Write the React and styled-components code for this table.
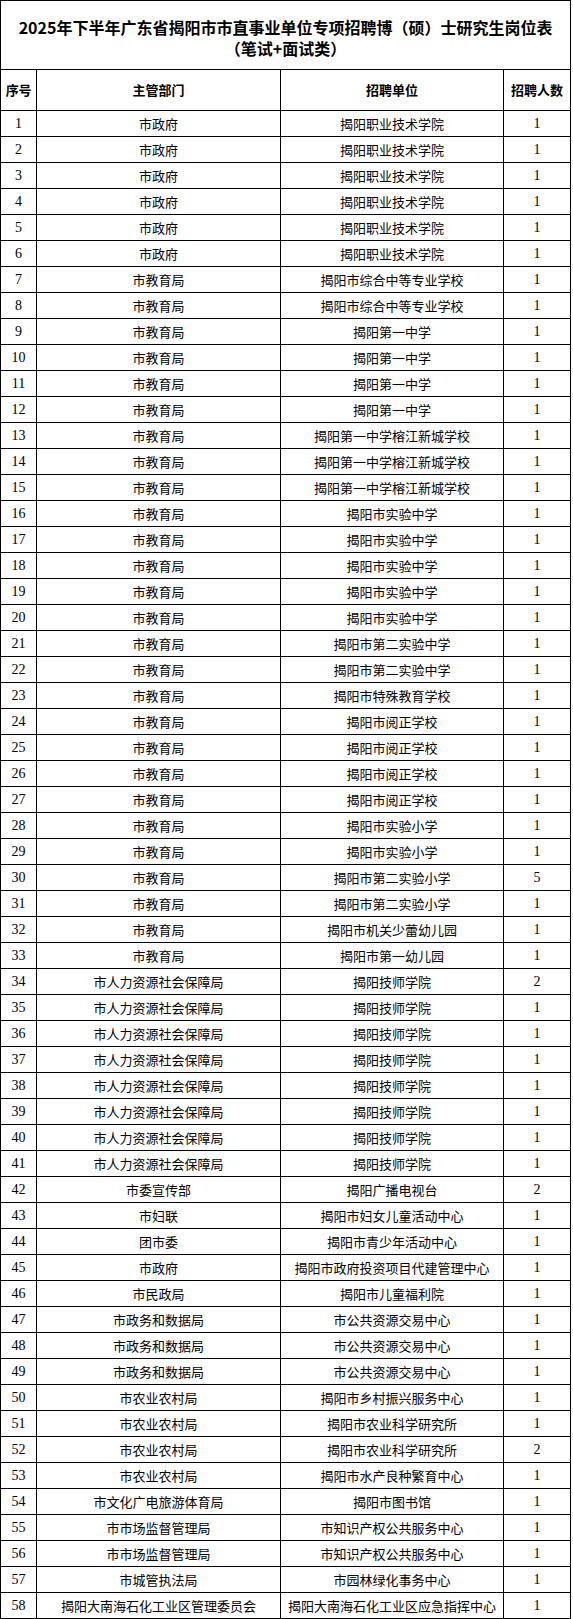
import React from "react";
import styled, { createGlobalStyle } from "styled-components";

const Global = createGlobalStyle`
  html, body { margin: 0; padding: 0; background: #fff; }
  body { font-family: "Noto Sans CJK SC", sans-serif; color: #000; }
`;

const Table = styled.table`
  border-collapse: collapse;
  table-layout: fixed;
  width: 570px;
  margin: 0;
  color: #000;
`;

const TitleCell = styled.th`
  height: 69px;
  padding: 5px 0 0 0;
  border: 1px solid #000;
  font-family: "Noto Sans CJK SC", sans-serif;
  font-weight: 700;
  font-size: 16px;
  text-align: center;
  vertical-align: middle;
  box-sizing: border-box;
`;

const TitleLine = styled.span`
  display: block;
  line-height: 21px;
  height: 21px;
  white-space: nowrap;
`;

const HeadCell = styled.th`
  height: 40px;
  padding: 0;
  border: 1px solid #000;
  font-family: "Noto Sans CJK SC", sans-serif;
  font-weight: 700;
  font-size: 13px;
  line-height: 16px;
  text-align: center;
  vertical-align: middle;
  white-space: nowrap;
  overflow: hidden;
  letter-spacing: ${(p) => (p.$tight ? "-0.3px" : "0")};
`;

const Cell = styled.td`
  height: 26px;
  padding: 1px 0 0 0;
  border: 1px solid #000;
  font-family: ${(p) =>
    p.$num
      ? '"Liberation Serif", "Noto Sans CJK SC", serif'
      : '"Noto Sans CJK SC", sans-serif'};
  font-size: ${(p) => (p.$num ? "14px" : "13px")};
  font-weight: 400;
  line-height: 16px;
  text-align: center;
  vertical-align: middle;
  white-space: nowrap;
  overflow: hidden;
  box-sizing: border-box;
`;

const Row = styled.tr``;

const groups = [
  [6, "市政府", "揭阳职业技术学院", 1],
  [2, "市教育局", "揭阳市综合中等专业学校", 1],
  [4, "市教育局", "揭阳第一中学", 1],
  [3, "市教育局", "揭阳第一中学榕江新城学校", 1],
  [5, "市教育局", "揭阳市实验中学", 1],
  [2, "市教育局", "揭阳市第二实验中学", 1],
  [1, "市教育局", "揭阳市特殊教育学校", 1],
  [4, "市教育局", "揭阳市阅正学校", 1],
  [2, "市教育局", "揭阳市实验小学", 1],
  [1, "市教育局", "揭阳市第二实验小学", 5],
  [1, "市教育局", "揭阳市第二实验小学", 1],
  [1, "市教育局", "揭阳市机关少蕾幼儿园", 1],
  [1, "市教育局", "揭阳市第一幼儿园", 1],
  [1, "市人力资源社会保障局", "揭阳技师学院", 2],
  [7, "市人力资源社会保障局", "揭阳技师学院", 1],
  [1, "市委宣传部", "揭阳广播电视台", 2],
  [1, "市妇联", "揭阳市妇女儿童活动中心", 1],
  [1, "团市委", "揭阳市青少年活动中心", 1],
  [1, "市政府", "揭阳市政府投资项目代建管理中心", 1],
  [1, "市民政局", "揭阳市儿童福利院", 1],
  [3, "市政务和数据局", "市公共资源交易中心", 1],
  [1, "市农业农村局", "揭阳市乡村振兴服务中心", 1],
  [1, "市农业农村局", "揭阳市农业科学研究所", 1],
  [1, "市农业农村局", "揭阳市农业科学研究所", 2],
  [1, "市农业农村局", "揭阳市水产良种繁育中心", 1],
  [1, "市文化广电旅游体育局", "揭阳市图书馆", 1],
  [2, "市市场监督管理局", "市知识产权公共服务中心", 1],
  [1, "市城管执法局", "市园林绿化事务中心", 1],
  [1, "揭阳大南海石化工业区管理委员会", "揭阳大南海石化工业区应急指挥中心", 1],
];

const rows = [];
groups.forEach(([n, dept, unit, count]) => {
  for (let i = 0; i < n; i++) rows.push({ dept, unit, count });
});

export default function App() {
  return (
    <>
      <Global />
      <Table>
        <colgroup>
          <col style={{ width: 36 }} />
          <col style={{ width: 244 }} />
          <col style={{ width: 223 }} />
          <col style={{ width: 67 }} />
        </colgroup>
        <thead>
          <Row>
            <TitleCell colSpan={4}>
              <TitleLine>
                2025年下半年广东省揭阳市市直事业单位专项招聘博（硕）士研究生岗位表
              </TitleLine>
              <TitleLine>（笔试+面试类）</TitleLine>
            </TitleCell>
          </Row>
          <Row>
            <HeadCell $tight>序号</HeadCell>
            <HeadCell>主管部门</HeadCell>
            <HeadCell>招聘单位</HeadCell>
            <HeadCell>招聘人数</HeadCell>
          </Row>
        </thead>
        <tbody>
          {rows.map((r, i) => (
            <Row key={i}>
              <Cell $num>{i + 1}</Cell>
              <Cell>{r.dept}</Cell>
              <Cell>{r.unit}</Cell>
              <Cell $num>{r.count}</Cell>
            </Row>
          ))}
        </tbody>
      </Table>
    </>
  );
}
